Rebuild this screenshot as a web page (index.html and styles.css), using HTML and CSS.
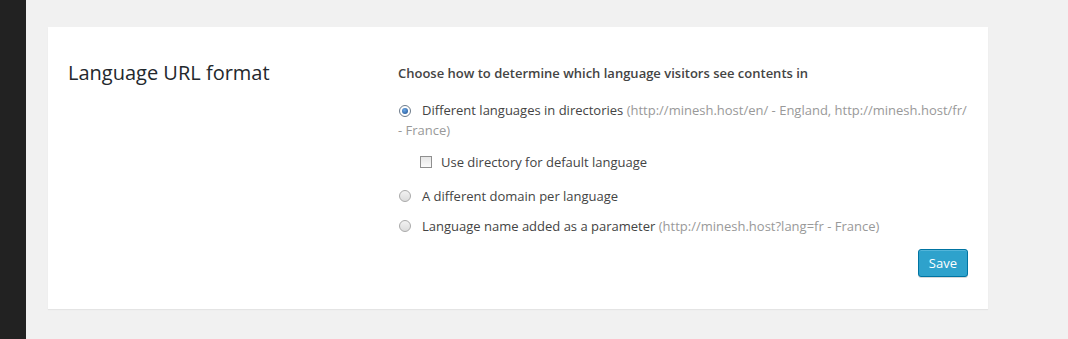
FILE: index.html
```html
<!DOCTYPE html>
<html>
<head>
<meta charset="utf-8">
<link rel="stylesheet" href="styles.css">
</head>
<body>
<div class="layout">
  <div class="sidebar"></div>
  <div class="main">
    <div class="panel">
      <h2 class="title">Language URL format</h2>
      <div class="options">
        <p class="heading">Choose how to determine which language visitors see contents in</p>
        <label class="opt first"><span class="radio checked"></span><span class="text">Different languages in directories <span class="hint">(http://minesh.host/en/ - England, http://minesh.host/fr/ - France)</span></span></label>
        <label class="opt sub">
          <span class="check"></span>
          <span class="text">Use directory for default language</span>
        </label>
        <label class="opt second">
          <span class="radio"></span>
          <span class="text">A different domain per language</span>
        </label>
        <label class="opt third">
          <span class="radio"></span>
          <span class="text">Language name added as a parameter <span class="hint">(http://minesh.host?lang=fr - France)</span></span>
        </label>
        <div class="actions">
          <button class="save">Save</button>
        </div>
      </div>
    </div>
  </div>
</div>
</body>
</html>
```
FILE: styles.css
```css
html, body {
  margin: 0;
  padding: 0;
  background: #f1f1f1;
  font-family: "Open Sans", "Liberation Sans", sans-serif;
  color: #444;
}
.layout {
  display: flex;
  min-height: 339px;
}
.sidebar {
  width: 26px;
  background: #222;
  flex: none;
}
.main {
  flex: 1;
  padding: 27px 0 0 22px;
}
.panel {
  width: 900px;
  background: #fff;
  padding: 20px 20px 32px 20px;
  display: grid;
  grid-template-columns: 330px 572px;
  box-shadow: 0 1px 1px rgba(0,0,0,0.05);
}
.title {
  margin: 0;
  font-size: 20px;
  font-weight: 400;
  line-height: 28px;
  color: #23282d;
  padding-top: 12px;
}
.options {
  font-size: 13px;
  line-height: 20px;
}
.heading {
  margin: 16px 0 0 0;
  font-weight: 600;
  color: #444;
}
.opt {
  display: flex;
  align-items: flex-start;
  gap: 11px;
}
.opt.first { margin-top: 17px; display: block; }
.opt.first .radio { margin-right: 11px; vertical-align: -2px; }
.opt.sub { margin-top: 12px; padding-left: 22px; gap: 9px; }
.opt.second { margin-top: 14px; }
.opt.third { margin-top: 10px; }
.hint { color: #999; }
.radio {
  display: inline-block;
  flex: none;
  width: 10px;
  height: 10px;
  margin-top: 4px;
  margin-left: 1px;
  border-radius: 50%;
  border: 1px solid #a9a9a9;
  background: linear-gradient(#f2f2f2, #dcdcdc);
  box-sizing: content-box;
  position: relative;
}
.radio.checked {
  background: #fff;
  border-color: #6d7b8a;
}
.radio.checked::after {
  content: "";
  position: absolute;
  left: 2px;
  top: 2px;
  width: 6px;
  height: 6px;
  border-radius: 50%;
  background: radial-gradient(circle at 40% 35%, #6aa8e8, #1e4e8c);
}
.check {
  flex: none;
  width: 10px;
  height: 10px;
  margin-top: 4px;
  border: 1px solid #8f8f8f;
  background: linear-gradient(#e6e6e6, #fafafa);
  box-sizing: content-box;
}
.actions {
  display: flex;
  justify-content: flex-end;
  margin-top: 13px;
  padding-right: 2px;
}
.save {
  font-family: "Open Sans", "Liberation Sans", sans-serif;
  font-size: 13px;
  line-height: 25px;
  height: 28px;
  padding: 0 10px;
  color: #fff;
  background: #2ea2cc;
  border: 1px solid #0074a2;
  border-radius: 3px;
  box-shadow: inset 0 1px 0 rgba(120,200,230,0.5), 0 1px 0 rgba(0,0,0,0.15);
}
```
